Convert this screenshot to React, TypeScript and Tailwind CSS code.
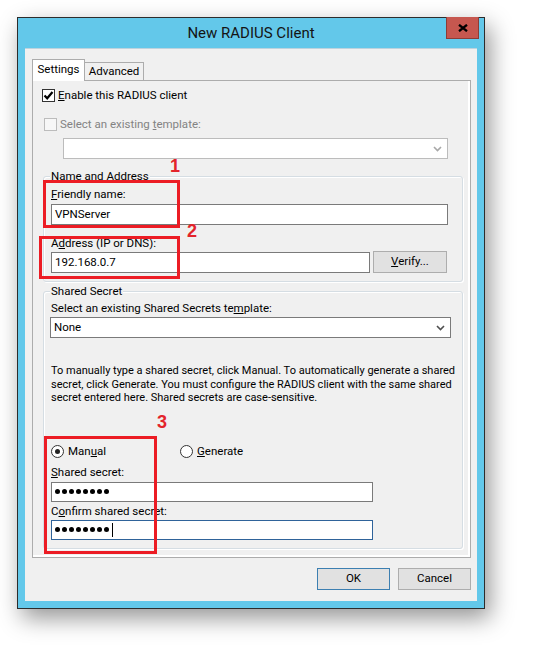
import React from "react";

const Chevron = ({ color }: { color: string }) => (
  <svg width="9" height="6" viewBox="0 0 9 6" className="shrink-0">
    <path d="M1 1 L4.5 4.5 L8 1" fill="none" stroke={color} strokeWidth="1.6" />
  </svg>
);

const Combo = ({
  text,
  disabled,
  className,
}: {
  text?: string;
  disabled?: boolean;
  className: string;
}) => (
  <div
    className={`shrink-0 flex items-center justify-between h-[21px] bg-white border pl-[3px] pr-[5px] ${
      disabled ? "border-[#bcbcbc]" : "border-[#7a7a7a]"
    } ${className}`}
  >
    <span className="leading-[15px]">{text}</span>
    <Chevron color={disabled ? "#a8a8a8" : "#505050"} />
  </div>
);

const Dots = ({ caret }: { caret?: boolean }) => (
  <div className="flex items-center gap-[2px]">
    {[0, 1, 2, 3, 4, 5, 6, 7].map((i) => (
      <span key={i} className="block w-[5px] h-[5px] rounded-full bg-black" />
    ))}
    {caret && <span className="block w-px h-[14px] bg-black ml-px" />}
  </div>
);

const GroupBox = ({
  title,
  className,
  children,
}: {
  title: string;
  className: string;
  children: React.ReactNode;
}) => (
  <div
    className={`shrink-0 relative border border-[#d5dde3] rounded-[3px] shadow-[inset_1px_1px_0_#ffffff,1px_1px_0_#ffffff] px-[7px] flex flex-col ${className}`}
  >
    <span className="absolute -top-[8px] left-[6px] px-[1px] bg-[#f0f0f0] leading-[15px]">
      {title}
    </span>
    {children}
  </div>
);

const Radio = ({ checked }: { checked?: boolean }) => (
  <span className="flex items-center justify-center w-[13px] h-[13px] rounded-full border border-[#333333] bg-white shrink-0">
    {checked && <span className="block w-[5px] h-[5px] rounded-full bg-[#222222]" />}
  </span>
);

export default function App() {
  return (
    <div className="relative w-[533px] h-[657px] bg-white pl-[17px] pt-[17px] font-['Roboto',sans-serif] text-[11.5px] text-black">
      <div className="w-[468px] h-[592px] border border-[#2c2c2c] bg-[#63c8ea] flex flex-col shadow-[5px_9px_22px_rgba(0,0,0,0.42)]">
        {/* title bar */}
        <div className="h-[30px] shrink-0 grid grid-cols-[1fr_auto_1fr]">
          <div />
          <div className="self-center text-[15px] text-[#141414] leading-[20px]">
            New RADIUS Client
          </div>
          <div className="flex justify-end pr-[5px]">
            <div className="-mt-px w-[33px] h-[22px] bg-[#c6574f] border border-t-0 border-[#8d3c36] flex items-center justify-center">
              <svg width="10" height="8" viewBox="0 0 10 8">
                <path d="M1 0.8 L9 7.2 M9 0.8 L1 7.2" stroke="#000" strokeWidth="2.3" />
              </svg>
            </div>
          </div>
        </div>

        {/* client area */}
        <div className="mx-[7px] h-[553px] shrink-0 bg-[#f0f0f0] border-t border-[#bdd3de] flex flex-col pt-[10px] pl-[7px] pr-[6px]">
          {/* tabs */}
          <div className="shrink-0 flex items-end h-[21px]">
            <div className="relative z-10 -mb-px w-[53px] h-[22px] bg-white border border-b-0 border-[#acacac] flex justify-center pt-[2px] leading-[15px]">
              Settings
            </div>
            <div className="-ml-px w-[60px] h-[18px] bg-[#f0f0f0] border border-b-0 border-[#acacac] flex justify-center pt-px leading-[15px]">
              Advanced
            </div>
          </div>

          {/* tab page */}
          <div className="h-[478px] shrink-0 border border-[#acacac] bg-[#f0f0f0] shadow-[inset_-2px_-2px_0_#ffffff] flex flex-col">
            <div className="shrink-0 mt-[8px] ml-[9px] h-[13px] flex items-center gap-[3px]">
              <span className="w-[13px] h-[13px] border border-[#333333] bg-white flex items-center justify-center">
                <svg width="11" height="11" viewBox="0 0 11 11">
                  <path d="M1.5 5.5 L4.2 8.3 L9.5 2" fill="none" stroke="#000" strokeWidth="2.2" />
                </svg>
              </span>
              <span className="leading-[15px]">
                <u>E</u>nable this RADIUS client
              </span>
            </div>

            <div className="shrink-0 mt-[16px] ml-[11px] h-[13px] flex items-center gap-[3px]">
              <span className="w-[13px] h-[13px] border border-[#bcbcbc] bg-[#f7f7f7]" />
              <span className="leading-[15px] text-[#838383]">
                Select an existing <u>t</u>emplate:
              </span>
            </div>

            <Combo disabled className="mt-[7px] ml-[30px] w-[385px]" />

            <GroupBox title="Name and Address" className="mt-[17px] ml-[10px] w-[420px] h-[106px]">
              <div className="mt-[10px] leading-[15px]">
                <u>F</u>riendly name:
              </div>
              <div className="shrink-0 mt-[2px] w-[397px] h-[21px] bg-white border border-[#7a7a7a] pl-[3px] flex items-center">
                VPNServer
              </div>
              <div className="mt-[11px] leading-[15px]">
                A<u>d</u>dress (IP or DNS):
              </div>
              <div className="shrink-0 h-[22px] flex items-end gap-[3px]">
                <div className="w-[319px] h-[21px] bg-white border border-[#7a7a7a] pl-[3px] flex items-center">
                  192.168.0.7
                </div>
                <div className="w-[74px] h-[22px] bg-[#e1e1e1] border border-[#adadad] flex items-center justify-center">
                  <span>
                    <u>V</u>erify...
                  </span>
                </div>
              </div>
            </GroupBox>

            <GroupBox title="Shared Secret" className="mt-[9px] ml-[10px] w-[420px] h-[258px]">
              <div className="mt-[9px] leading-[15px]">
                Select an existing Shared Secrets te<u>m</u>plate:
              </div>
              <Combo text="None" className="mt-[1px] -ml-px w-[401px]" />
              <p className="shrink-0 mt-[26px] leading-[13.5px] whitespace-nowrap text-[11px]">
                To manually type a shared secret, click Manual. To automatically generate a shared
                <br />
                secret, click Generate. You must configure the RADIUS client with the same shared
                <br />
                secret entered here. Shared secrets are case-sensitive.
              </p>
              <div className="shrink-0 mt-[40px] h-[13px] flex items-center">
                <div className="w-[129px] flex items-center gap-[4px]">
                  <Radio checked />
                  <span className="leading-[15px]">
                    Man<u>u</u>al
                  </span>
                </div>
                <div className="flex items-center gap-[4px]">
                  <Radio />
                  <span className="leading-[15px]">
                    <u>G</u>enerate
                  </span>
                </div>
              </div>
              <div className="mt-[7px] leading-[15px]">
                <u>S</u>hared secret:
              </div>
              <div className="shrink-0 mt-[2px] w-[322px] h-[20px] bg-white border border-[#7a7a7a] pl-[3px] flex items-center">
                <Dots />
              </div>
              <div className="mt-[2px] leading-[15px]">
                C<u>o</u>nfirm shared secret:
              </div>
              <div className="shrink-0 mt-[1px] w-[322px] h-[20px] bg-white border border-[#2f639a] pl-[3px] flex items-center">
                <Dots caret />
              </div>
            </GroupBox>
          </div>

          {/* dialog buttons */}
          <div className="shrink-0 mt-[10px] flex justify-end gap-[8px]">
            <div className="w-[73px] h-[22px] bg-[#e1e1e1] border border-[#3c7fb1] flex items-center justify-center">
              OK
            </div>
            <div className="w-[73px] h-[22px] bg-[#e1e1e1] border border-[#adadad] flex items-center justify-center">
              Cancel
            </div>
          </div>
        </div>
      </div>

      {/* red annotations */}
      <div className="absolute left-[43px] top-[180px] w-[137px] h-[48px] border-[3px] border-[#ec1c24]" />
      <div className="absolute left-[39px] top-[236px] w-[141px] h-[43px] border-[3px] border-[#ec1c24]" />
      <div className="absolute left-[44px] top-[436px] w-[113px] h-[118px] border-[3px] border-[#ec1c24]" />
      <div className="absolute left-[170px] top-[157px] font-['Liberation_Sans',sans-serif] font-bold text-[18px] leading-none text-[#e3242b]">
        1
      </div>
      <div className="absolute left-[187px] top-[222px] font-['Liberation_Sans',sans-serif] font-bold text-[18px] leading-none text-[#e3242b]">
        2
      </div>
      <div className="absolute left-[157px] top-[413px] font-['Liberation_Sans',sans-serif] font-bold text-[18px] leading-none text-[#e3242b]">
        3
      </div>
    </div>
  );
}
